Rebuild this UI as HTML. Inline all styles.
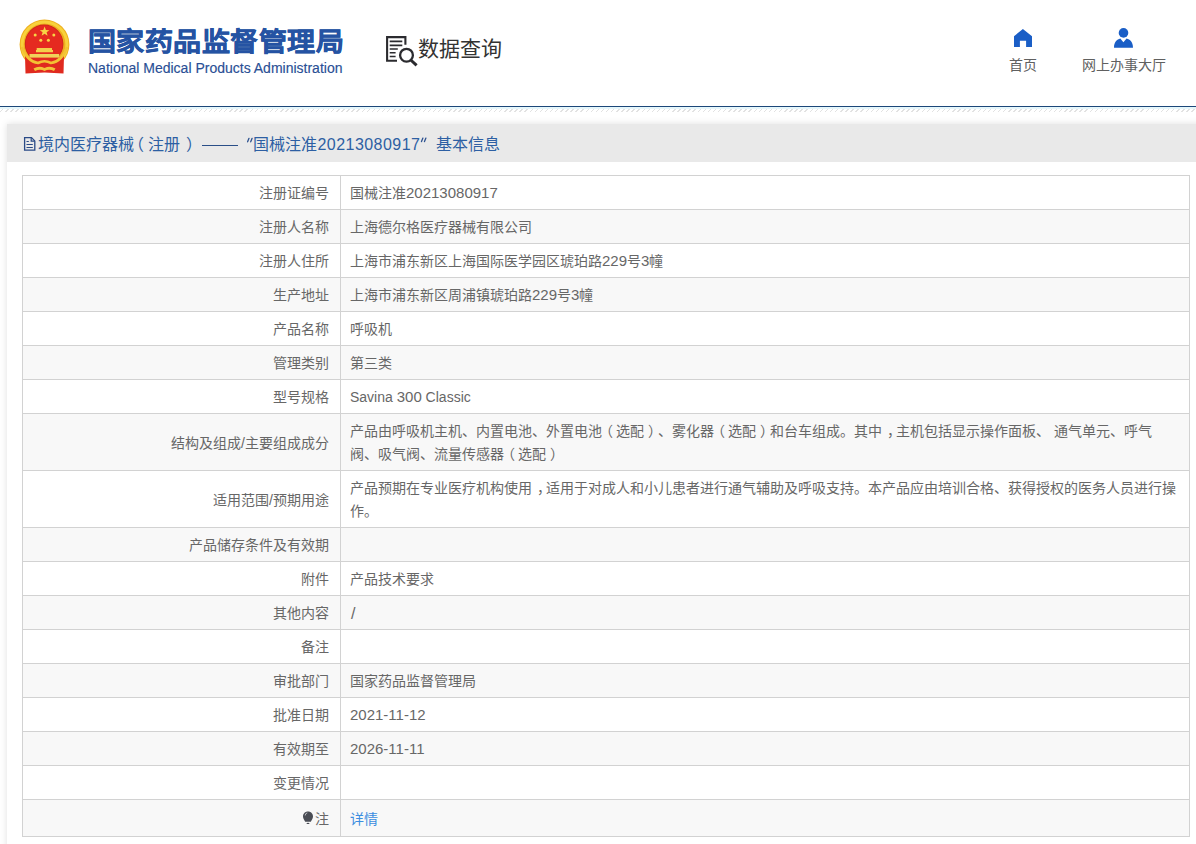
<!DOCTYPE html>
<html lang="zh-CN">
<head>
<meta charset="utf-8">
<style>
*{margin:0;padding:0;box-sizing:border-box;}
html,body{text-spacing-trim:space-all;width:1196px;height:844px;overflow:hidden;background:#fff;font-family:"Liberation Sans",sans-serif;}
.hdr{position:absolute;left:0;top:0;width:1196px;height:106px;background:#fff;}
.emb{position:absolute;left:17px;top:17px;width:56px;height:60px;}
.t1{position:absolute;left:87.5px;top:26px;font-size:28px;font-weight:bold;color:#2553a3;-webkit-text-stroke:0.6px #2553a3;line-height:36px;white-space:nowrap;letter-spacing:0.5px;transform:scaleY(0.92);transform-origin:0 0;}
.t2{position:absolute;left:88px;top:60px;font-size:14px;color:#2a4f95;-webkit-text-stroke:0.15px #2a4f95;line-height:16px;white-space:nowrap;}
.dq{position:absolute;left:384px;top:34px;width:36px;height:34px;}
.dqt{position:absolute;left:418px;top:34px;font-size:21px;color:#333;line-height:30px;white-space:nowrap;}
.nav{position:absolute;top:55px;text-align:center;font-size:14px;color:#606060;line-height:20px;white-space:nowrap;}
.line{position:absolute;left:0;top:106px;width:1196px;height:1px;background:#1c4779;}
.line2{position:absolute;left:0;top:107px;width:1196px;height:2px;background:#e6f7fb;}
.hatch{position:absolute;left:0;top:109px;width:1196px;height:3px;
 background:repeating-linear-gradient(-45deg,#fff 0,#fff 2.6px,#e2e2e2 2.6px,#e2e2e2 3.6px);}
.pg{position:absolute;left:0;top:112px;width:1196px;height:732px;background:#fff;}
.panel{position:absolute;left:7px;top:124px;width:1260px;height:760px;background:#fff;box-shadow:0 0 7px rgba(0,0,0,0.13);}
.ptitle{position:absolute;left:0;top:0;width:1260px;height:38px;background:#e9e9e9;color:#2d5fa3;font-size:16px;line-height:38px;white-space:nowrap;}
.ts{position:absolute;top:2px;}
.q{font-size:19px;top:3px;}
.dash{position:absolute;left:195px;top:21px;width:36px;height:1px;background:#2a4f88;}
table{position:absolute;left:22px;top:175px;width:1168px;border-collapse:collapse;font-size:14px;color:#676767;}
td{border:1px solid #d2d2d2;padding:6px 12px 4px 9px;line-height:23px;vertical-align:middle;}
td.l{width:318px;text-align:right;padding-right:11px;}
tr.last td{padding-top:8px;padding-bottom:5px;}
tr:nth-child(even) td{background:#f8f8f8;}
.n{font-size:15px;line-height:18px;}
.lp{position:relative;left:-3px;}
.rp{position:relative;left:4px;}
.cm{position:relative;left:5px;}
</style>
</head>
<body>
<div class="hdr">
  <svg class="emb" style="position:absolute;left:0;top:0;width:100px;height:90px" viewBox="0 0 100 90">
  <circle cx="44.5" cy="44.4" r="24.9" fill="#eeae1e"/>
  <circle cx="44.5" cy="44.4" r="22.4" fill="none" stroke="#f8d23c" stroke-width="3"/>
  <circle cx="44.1" cy="43.9" r="19.3" fill="#c9241a"/>
  <circle cx="44.1" cy="43.9" r="18.6" fill="#e52a20"/>
  <path d="M44.6 26.6 L45.9 30.1 L49.4 30.2 L46.6 32.3 L47.6 35.7 L44.6 33.7 L41.6 35.7 L42.6 32.3 L39.8 30.2 L43.3 30.1 Z" fill="#f7d445"/>
  <circle cx="35.2" cy="34.9" r="1.5" fill="#f7d445"/>
  <circle cx="40.8" cy="40.3" r="1.5" fill="#f7d445"/>
  <circle cx="48.4" cy="40.3" r="1.5" fill="#f7d445"/>
  <circle cx="53.8" cy="34.9" r="1.5" fill="#f7d445"/>
  <path d="M25 56 Q44.5 62 64 56 L63.5 73.5 L44.5 72.5 L25.5 73.5 Z" fill="#e02a1f"/>
  <path d="M36.7 48.1 H52 V50 H53 V52.2 H36 V50 H36.7 Z" fill="#f4cf4a"/>
  <rect x="29.5" y="54" width="29.7" height="3.6" fill="#f0d25a"/>
  <path d="M22 47 Q27 61.5 38 63 Q44.5 59.5 51 63 Q62 61.5 67 47" fill="none" stroke="#f3c233" stroke-width="2.6"/>
  <path d="M33.5 68.5 Q39 65.5 44.5 68 Q50 65.5 55.5 68.5 L54 71 Q49 68.5 44.5 71 Q40 68.5 35 71 Z" fill="#f3c43a"/>
</svg>
  <div class="t1">国家药品监督管理局</div>
  <div class="t2">National Medical Products Administration</div>
  <svg style="position:absolute;left:380px;top:30px;width:42px;height:40px" viewBox="380 30 42 40">
  <path d="M397 60.7 H387.1 V37.1 H405.4 V44.7" fill="none" stroke="#2b2b2f" stroke-width="2.1"/>
  <path d="M389.7 41.4 H402.3 M389.7 45.4 H402.3 M389.7 49 H397.8 M389.7 52.7 H395.6 M389.7 56.5 H395.6" stroke="#2b2b2f" stroke-width="1.6"/>
  <circle cx="406.5" cy="55.2" r="6.4" fill="none" stroke="#2b2b2f" stroke-width="2.3"/>
  <path d="M410.8 60 L416.6 65.4" stroke="#2b2b2f" stroke-width="3"/>
</svg>
  <div class="dqt">数据查询</div>
  <svg style="position:absolute;left:1000px;top:20px;width:150px;height:35px" viewBox="1000 20 150 35">
  <path d="M1022.9 29.1 L1032 36.3 V46.9 H1026.1 V40.8 H1019.9 V46.9 H1014 V36.2 Z" fill="#1a5ec6"/>
  <circle cx="1123.5" cy="32.9" r="4.8" fill="#1a5ec6"/>
  <path d="M1114 47.7 C1114 42 1117 39.5 1120.3 38.6 L1123.4 42.3 L1126.6 38.6 C1130 39.5 1133 42 1133 47.7 Z" fill="#1a5ec6"/>
</svg>
  <div class="nav" style="left:1009px;">首页</div>
  <div class="nav" style="left:1082px;">网上办事大厅</div>
</div>
<div class="line"></div>
<div class="line2"></div>
<div class="hatch"></div>
<div class="pg"></div>
<div class="panel"><div class="ptitle">
  <svg style="position:absolute;left:13px;top:9px;width:20px;height:22px" viewBox="20 133 20 22">
    <path d="M24.6 137.6 H31.5 L34.8 140.9 V150.1 H24.6 Z" fill="none" stroke="#2a4a86" stroke-width="1.3"/>
    <path d="M31.2 137.6 V141.2 H34.8" fill="none" stroke="#2a4a86" stroke-width="1.2"/>
    <path d="M26.5 141.5 H28.8 M26.5 144.5 H32.8 M26.5 147.5 H32.8" stroke="#2a4a86" stroke-width="1.1"/>
  </svg>
  <span class="ts" style="left:30.5px">境内医疗器械</span>
  <span class="ts" style="left:121.4px">（</span>
  <span class="ts" style="left:141px">注册</span>
  <span class="ts" style="left:178.9px">）</span>
  <span class="dash"></span>
  
  <span class="ts" style="left:245.5px">国械注准<span style="letter-spacing:0.45px;margin-left:1px">20213080917</span></span>
  
  <span class="ts" style="left:429px">基本信息</span>
</div></div>
<table>
<tr><td class="l">注册证编号</td><td>国械注准<span class="n">20213080917</span></td></tr>
<tr><td class="l">注册人名称</td><td>上海德尔格医疗器械有限公司</td></tr>
<tr><td class="l">注册人住所</td><td>上海市浦东新区上海国际医学园区琥珀路<span class="n">229</span>号<span class="n">3</span>幢</td></tr>
<tr><td class="l">生产地址</td><td>上海市浦东新区周浦镇琥珀路<span class="n">229</span>号<span class="n">3</span>幢</td></tr>
<tr><td class="l">产品名称</td><td>呼吸机</td></tr>
<tr><td class="l">管理类别</td><td>第三类</td></tr>
<tr><td class="l">型号规格</td><td>Savina <span class="n">300</span> Classic</td></tr>
<tr><td class="l">结构及组成/主要组成成分</td><td>产品由呼吸机主机、内置电池、外置电池<span class="lp">（</span>选配<span class="rp">）</span>、雾化器<span class="lp">（</span>选配<span class="rp">）</span>和台车组成。其中<span class="cm">，</span>主机包括显示操作面板、 通气单元、呼气阀、吸气阀、流量传感器<span class="lp">（</span>选配<span class="rp">）</span></td></tr>
<tr><td class="l">适用范围/预期用途</td><td>产品预期在专业医疗机构使用<span class="cm">，</span>适用于对成人和小儿患者进行通气辅助及呼吸支持。本产品应由培训合格、获得授权的医务人员进行操作。</td></tr>
<tr><td class="l">产品储存条件及有效期</td><td></td></tr>
<tr><td class="l">附件</td><td>产品技术要求</td></tr>
<tr><td class="l">其他内容</td><td><span style="font-size:16px;line-height:18px;position:relative;left:1px;top:1px">/</span></td></tr>
<tr><td class="l">备注</td><td></td></tr>
<tr><td class="l">审批部门</td><td>国家药品监督管理局</td></tr>
<tr><td class="l">批准日期</td><td><span class="n">2021-11-12</span></td></tr>
<tr><td class="l">有效期至</td><td><span class="n">2026-11-11</span></td></tr>
<tr><td class="l">变更情况</td><td></td></tr>
<tr class="last"><td class="l">注</td><td><span style="color:#3b8ee0">详情</span></td></tr>
</table>
<svg style="position:absolute;left:298px;top:806px;width:20px;height:22px" viewBox="298 806 20 22">
  <path d="M308 811.4 C311 811.4 313 813.6 313 816.4 C313 818.3 312 819.5 310.8 821.7 H305.2 C304 819.5 303 818.3 303 816.4 C303 813.6 305 811.4 308 811.4 Z" fill="#4a4d55"/>
  <path d="M305.2 815.5 Q305.3 813.3 307.3 812.9" fill="none" stroke="#d8d8dc" stroke-width="0.8"/>
  <ellipse cx="308" cy="823.4" rx="1.5" ry="0.7" fill="#4a4d55"/>
</svg>
<svg style="position:absolute;left:240px;top:132px;width:200px;height:16px" viewBox="240 132 200 16">
  <path d="M247.6 141.8 L249 138.3 M250.7 141.8 L252.1 138.3 M421.5 141.6 L422.9 138.1 M424.5 141.6 L425.9 138.1" stroke="#2d5290" stroke-width="1.3" stroke-linecap="round"/>
</svg>
</body>
</html>
